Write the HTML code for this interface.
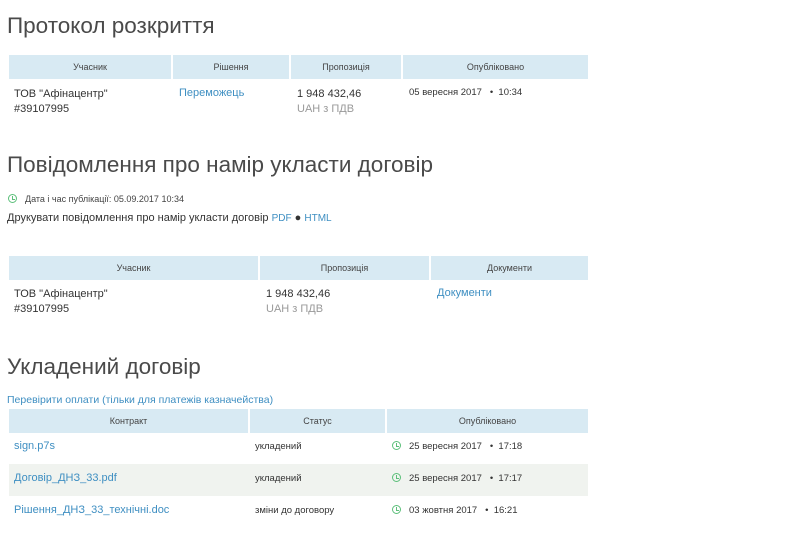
<!DOCTYPE html>
<html><head><meta charset="utf-8"><style>
body{margin:0;width:800px;height:550px;background:#fff;font-family:"Liberation Sans",sans-serif;color:#333;position:relative;overflow:hidden}
.a{position:absolute;white-space:nowrap}
h1{position:absolute;margin:0;font-weight:normal;font-size:22.5px;color:#4a4a4a;left:7px;white-space:nowrap}
.hd{position:absolute;height:24px;background:#d8eaf3;font-size:9px;color:#444;text-align:center;line-height:24px}
.t{font-size:11px;color:#333}
.l{color:#3f8fc2}
.g{color:#999}
.sm{font-size:9px;color:#444}
.stripe{position:absolute;left:9px;width:579px;background:#f0f3ef}
.clk{display:inline-block;width:7px;height:7px;border:1.3px solid #5cbf7a;border-radius:50%;position:relative;vertical-align:-1px;margin-right:8px}
.clk:after{content:"";position:absolute;left:3px;top:1px;width:2px;height:3px;border-left:1px solid #5cbf7a;border-bottom:1px solid #5cbf7a}
</style></head><body>
<h1 style="top:13px">Протокол розкриття</h1>
<div class="hd" style="left:9px;top:55px;width:162px">Учасник</div>
<div class="hd" style="left:173px;top:55px;width:116px">Рішення</div>
<div class="hd" style="left:291px;top:55px;width:110px">Пропозиція</div>
<div class="hd" style="left:403px;top:55px;width:185px">Опубліковано</div>
<div class="a t" style="left:14px;top:87px;line-height:15px">ТОВ "Афінацентр"<br>#39107995</div>
<div class="a t l" style="left:179px;top:87px">Переможець</div>
<div class="a t" style="left:297px;top:87px;line-height:15px">1 948 432,46<br><span class="g">UAH з ПДВ</span></div>
<div class="a" style="left:409px;top:87px;font-size:9.5px">05 вересня 2017 &nbsp; • &nbsp;10:34</div>

<h1 style="top:152px">Повідомлення про намір укласти договір</h1>
<div class="a sm" style="left:8px;top:194px"><span class="clk"></span>Дата і час публікації: 05.09.2017 10:34</div>
<div class="a t" style="left:7px;top:212px">Друкувати повідомлення про намір укласти договір <span class="l" style="font-size:10px">PDF</span> ● <span class="l" style="font-size:10px">HTML</span></div>
<div class="hd" style="left:9px;top:256px;width:249px">Учасник</div>
<div class="hd" style="left:260px;top:256px;width:169px">Пропозиція</div>
<div class="hd" style="left:431px;top:256px;width:157px">Документи</div>
<div class="a t" style="left:14px;top:287px;line-height:15px">ТОВ "Афінацентр"<br>#39107995</div>
<div class="a t" style="left:266px;top:287px;line-height:15px">1 948 432,46<br><span class="g">UAH з ПДВ</span></div>
<div class="a t l" style="left:437px;top:287px">Документи</div>

<h1 style="top:354px">Укладений договір</h1>
<div class="a t l" style="left:7px;top:394px;font-size:10.5px">Перевірити оплати (тільки для платежів казначейства)</div>
<div class="hd" style="left:9px;top:409px;width:239px">Контракт</div>
<div class="hd" style="left:250px;top:409px;width:135px">Статус</div>
<div class="hd" style="left:387px;top:409px;width:201px">Опубліковано</div>
<div class="stripe" style="top:464px;height:32px"></div>
<div class="a t l" style="left:14px;top:440px">sign.p7s</div>
<div class="a" style="left:255px;top:441px;font-size:9.5px">укладений</div>
<div class="a" style="left:392px;top:441px;font-size:9.5px"><span class="clk"></span>25 вересня 2017 &nbsp; • &nbsp;17:18</div>
<div class="a t l" style="left:14px;top:472px">Договір_ДНЗ_33.pdf</div>
<div class="a" style="left:255px;top:473px;font-size:9.5px">укладений</div>
<div class="a" style="left:392px;top:473px;font-size:9.5px"><span class="clk"></span>25 вересня 2017 &nbsp; • &nbsp;17:17</div>
<div class="a t l" style="left:14px;top:504px">Рішення_ДНЗ_33_технічні.doc</div>
<div class="a" style="left:255px;top:505px;font-size:9.5px">зміни до договору</div>
<div class="a" style="left:392px;top:505px;font-size:9.5px"><span class="clk"></span>03 жовтня 2017 &nbsp; • &nbsp;16:21</div>
</body></html>
